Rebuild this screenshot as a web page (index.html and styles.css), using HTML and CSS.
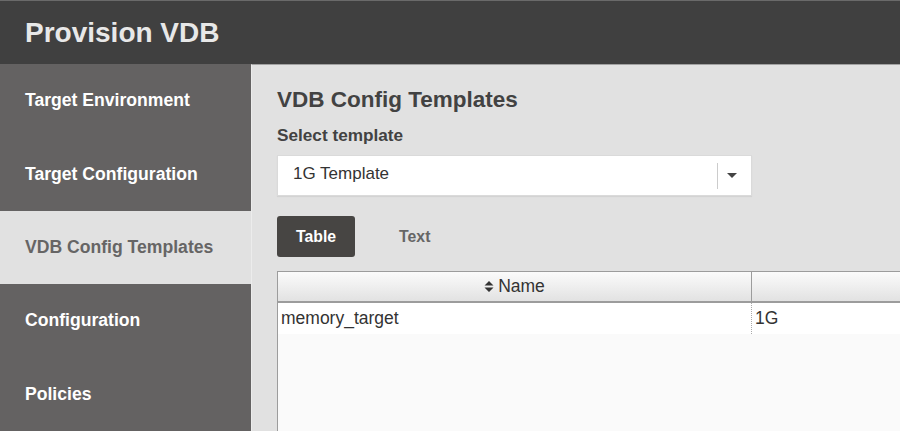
FILE: index.html
```html
<!DOCTYPE html>
<html lang="en">
<head>
<meta charset="utf-8">
<title>Provision VDB</title>
<link rel="stylesheet" href="styles.css">
</head>
<body>
<div class="app">
  <header class="topbar">
    <h1 class="title">Provision VDB</h1>
  </header>
  <div class="main">
    <nav class="sidebar">
      <div class="nav-item">Target Environment</div>
      <div class="nav-item">Target Configuration</div>
      <div class="nav-item active">VDB Config Templates</div>
      <div class="nav-item">Configuration</div>
      <div class="nav-item">Policies</div>
    </nav>
    <section class="content">
      <h2 class="heading">VDB Config Templates</h2>
      <div class="label">Select template</div>
      <div class="select">
        <span class="select-value">1G Template</span>
        <span class="select-sep"></span>
        <span class="select-caret"></span>
      </div>
      <div class="tabs">
        <div class="tab active">Table</div>
        <div class="tab">Text</div>
      </div>
      <div class="grid">
        <div class="grid-head">
          <div class="col col-name">
            <svg class="sort" width="10" height="13" viewBox="0 0 10 13"><path d="M0.5 5.5 L5 1 L9.5 5.5 Z M0.5 7.5 L5 12 L9.5 7.5 Z" fill="#333"/></svg>
            <span>Name</span>
          </div>
          <div class="col col-value"></div>
        </div>
        <div class="grid-row">
          <div class="col col-name">memory_target</div>
          <div class="col col-value">1G</div>
        </div>
        <div class="grid-empty"></div>
      </div>
    </section>
  </div>
</div>
</body>
</html>
```

FILE: styles.css
```css
* { box-sizing: border-box; }
html, body { margin: 0; padding: 0; }
body {
  font-family: "Liberation Sans", Arial, Helvetica, sans-serif;
  width: 900px;
  height: 431px;
  overflow: hidden;
  background: #e1e1e1;
}
.app {
  display: flex;
  flex-direction: column;
  height: 431px;
}
.topbar {
  height: 64px;
  flex: none;
  background: #404040;
  border-top: 1px solid #6a6a6a;
  display: flex;
  align-items: center;
  padding-left: 25px;
}
.title {
  margin: 0;
  font-size: 28px;
  font-weight: bold;
  color: #e8e8e8;
  line-height: 32px;
}
.main {
  flex: 1;
  display: flex;
  min-height: 0;
}
.sidebar {
  width: 251px;
  flex: none;
  display: flex;
  flex-direction: column;
  background: #646262;
}
.nav-item {
  flex: 1;
  display: flex;
  align-items: center;
  padding-left: 25px;
  font-size: 17.6px;
  font-weight: bold;
  color: #ffffff;
}
.nav-item.active {
  background: #e1e1e1;
  color: #666565;
}
.content {
  flex: 1;
  min-width: 0;
  overflow: hidden;
  background: #e1e1e1;
  border-top: 1px solid #a2a2a2;
  border-left: 1px solid #ececec;
  padding-left: 25px;
  display: flex;
  flex-direction: column;
}
.heading {
  margin: 22px 0 0;
  font-size: 22.5px;
  line-height: 26px;
  font-weight: bold;
  color: #424242;
}
.label {
  margin-top: 12px;
  font-size: 17.2px;
  line-height: 20px;
  font-weight: bold;
  color: #424242;
}
.select {
  margin-top: 10px;
  width: 475px;
  height: 41px;
  background: #fff;
  border: 1px solid #dadada;
  box-shadow: 0 1px 1px rgba(0,0,0,0.06);
  display: flex;
  align-items: center;
  padding: 0 0 4px 15px;
}
.select-value {
  flex: 1;
  font-size: 17px;
  line-height: 20px;
  color: #333;
}
.select-sep {
  width: 1px;
  height: 26px;
  background: #cccccc;
  margin-top: 4px;
}
.select-caret {
  width: 0;
  height: 0;
  border-left: 5px solid transparent;
  border-right: 5px solid transparent;
  border-top: 5px solid #444;
  margin: 4px 14px 0 9px;
}
.tabs {
  margin-top: 20px;
  display: flex;
  gap: 25px;
}
.tab {
  height: 41px;
  padding: 0 19px;
  display: flex;
  align-items: center;
  font-size: 15.8px;
  font-weight: bold;
  color: #666;
  border-radius: 3px;
}
.tab.active {
  background: #474543;
  color: #ffffff;
}
.grid {
  margin-top: 14px;
  width: 800px;
  flex: 1;
  display: flex;
  flex-direction: column;
  border-left: 1px solid #9c9c9c;
  background: #fafafa;
}
.grid-head {
  height: 32px;
  display: flex;
  border-top: 1px solid #9c9c9c;
  border-bottom: 2px solid #9c9c9c;
  background: linear-gradient(#fbfbfb, #e2e2e2);
}
.grid-head .col {
  display: flex;
  align-items: center;
  justify-content: center;
  gap: 4px;
  font-size: 17.5px;
  color: #333;
}
.grid-head .col-name {
  border-right: 1px solid #9c9c9c;
}
.col-name { width: 474px; flex: none; }
.col-value { flex: 1; }
.grid-row {
  height: 31px;
  display: flex;
  background: #ffffff;
}
.grid-row .col {
  display: flex;
  align-items: center;
  font-size: 17.5px;
  color: #333;
}
.grid-row .col-name {
  padding-left: 3px;
  border-right: 1px dotted #aaa;
}
.grid-row .col-value {
  padding-left: 3px;
}
.grid-empty { flex: 1; }
.sort { display: block; }
```
